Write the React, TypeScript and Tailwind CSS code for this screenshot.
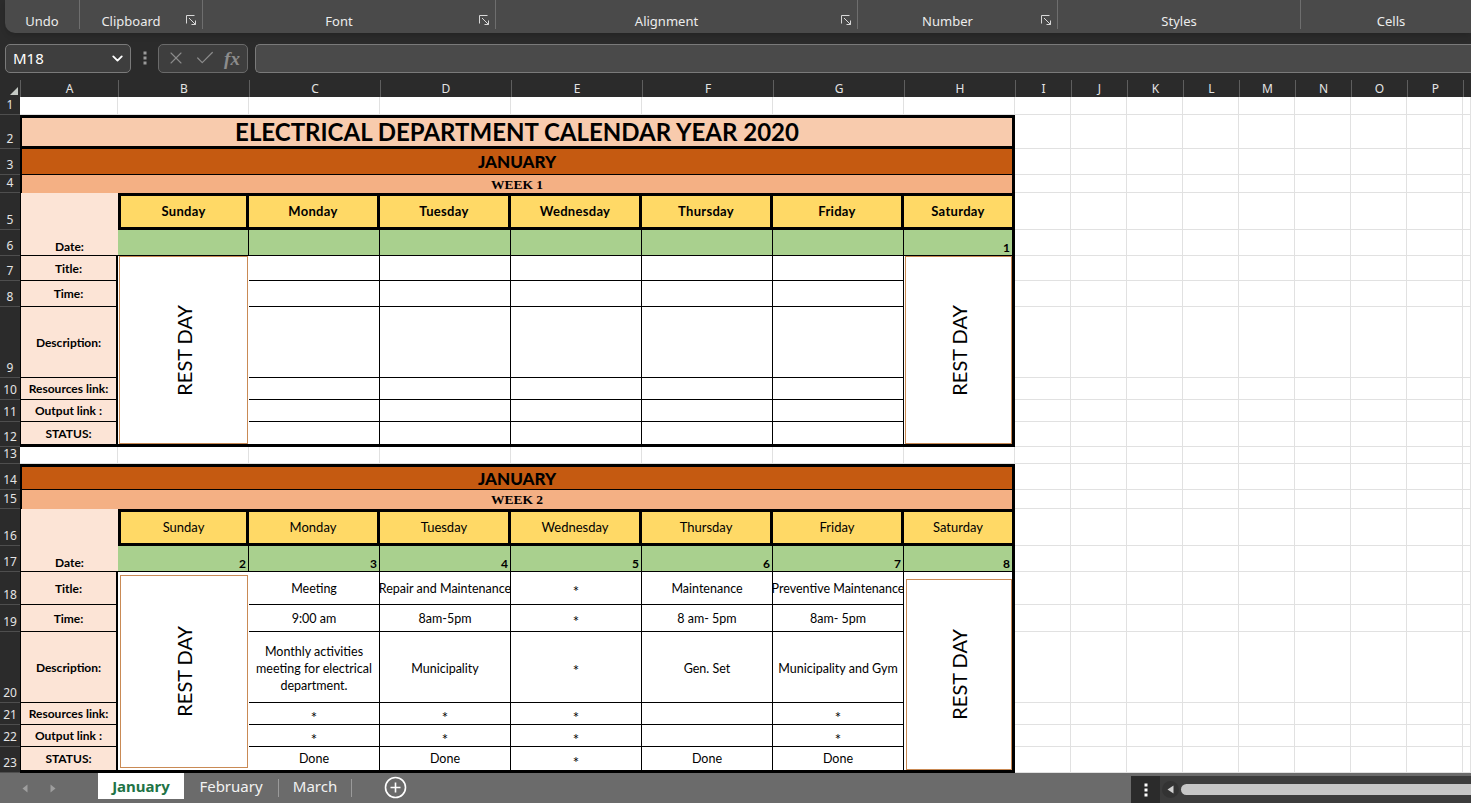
import React from 'react';
import { ChevronDown, X, Check } from 'lucide-react';

// Excel-like sheet: Electrical department calendar (dark chrome, light grid)

const SEGOE = "font-['Noto_Sans','Open_Sans',sans-serif]";
const CAL = "font-[Lato,'Open_Sans',sans-serif]";
const GRID_AH = 'grid grid-cols-[98px_131px_131px_131px_131px_131px_131px_1fr]';

const LETTERS = ['A', 'B', 'C', 'D', 'E', 'F', 'G', 'H', 'I', 'J', 'K', 'L', 'M', 'N', 'O', 'P'];
const ROW_NUMS = Array.from({ length: 23 }, (_, i) => i + 1);
const DAYS = ['Sunday', 'Monday', 'Tuesday', 'Wednesday', 'Thursday', 'Friday', 'Saturday'];
const LABELS = ['Title:', 'Time:', 'Description:', 'Resources link:', 'Output link :', 'STATUS:'];

type Entry = [string, string, string, string, string, string];

const WEEK2: Entry[] = [
  ['Meeting', '9:00 am', 'Monthly activities meeting for electrical department.', '*', '*', 'Done'],
  ['Repair and Maintenance', '8am-5pm', 'Municipality', '*', '*', 'Done'],
  ['*', '*', '*', '*', '*', '*'],
  ['Maintenance', '8 am- 5pm', 'Gen. Set', '', '', 'Done'],
  ['Preventive Maintenance', '8am- 5pm', 'Municipality and Gym', '*', '*', 'Done'],
];
const EMPTY: Entry[] = Array.from({ length: 5 }, () => ['', '', '', '', '', ''] as Entry);

const GROUPS = [
  { label: 'Undo', w: 'w-[75px]', launcher: false },
  { label: 'Clipboard', w: 'w-[123px]', launcher: true },
  { label: 'Font', w: 'w-[293px]', launcher: true },
  { label: 'Alignment', w: 'w-[362px]', launcher: true },
  { label: 'Number', w: 'w-[200px]', launcher: true },
  { label: 'Styles', w: 'w-[243px]', launcher: false },
  { label: 'Cells', w: 'w-[180px]', launcher: false },
];

function Launcher() {
  return (
    <svg width="11" height="11" viewBox="0 0 11 11" fill="none" stroke="#d8d8d8" strokeWidth="1" className="absolute right-[5px] bottom-[3px]">
      <path d="M0.5 8.5V0.5H8.5" />
      <path d="M3 3L9.5 9.5M9.5 5.5V9.5H5.5" />
    </svg>
  );
}

function Ribbon() {
  return (
    <div className="h-[33px] ml-[5px] bg-[#4a4a4a] rounded-bl-[10px] flex overflow-hidden shrink-0 shadow-md">
      {GROUPS.map((g, i) => (
        <div
          key={g.label}
          className={`relative h-[29px] shrink-0 flex items-end justify-center leading-[16px] text-[13px] text-[#ececec] ${SEGOE} ${g.w} ${g.launcher ? 'pr-[20px]' : ''} ${i < GROUPS.length - 1 ? 'border-r border-[#6e6e6e]' : ''}`}
        >
          {g.label}
          {g.launcher && <Launcher />}
        </div>
      ))}
    </div>
  );
}

function FormulaBar() {
  return (
    <div className={`mt-[10px] h-[30px] flex items-center pl-[5px] shrink-0 ${SEGOE}`}>
      <div className="w-[126px] h-[29px] rounded-[5px] border border-[#7a7a7a] bg-[#3e3e3e] flex items-center justify-between pl-[7px] pr-[4px] text-[15px] text-white">
        <span>M18</span>
        <ChevronDown size={17} strokeWidth={2.6} color="#ffffff" />
      </div>
      <div className="w-[27px] flex justify-center">
        <svg width="4" height="14" viewBox="0 0 4 14" fill="#9a9a9a">
          <rect x="0.5" y="0.5" width="3" height="3" />
          <rect x="0.5" y="5.5" width="3" height="3" />
          <rect x="0.5" y="10.5" width="3" height="3" />
        </svg>
      </div>
      <div className="w-[90px] h-[29px] rounded-[5px] border border-[#6a6a6a] bg-[#3e3e3e] flex items-center justify-around px-[3px]">
        <X size={20} strokeWidth={1.3} color="#8c8c8c" />
        <Check size={22} strokeWidth={1.3} color="#8c8c8c" />
        <span className="font-['Liberation_Serif',serif] italic font-bold text-[19px] text-[#8c8c8c] leading-none">fx</span>
      </div>
      <div className="flex-1 h-[29px] ml-[7px] rounded-l-[5px] border border-r-0 border-[#7a7a7a] bg-[#4a4a4a]" />
    </div>
  );
}

function ColumnHeaders() {
  return (
    <div className={`mt-[7px] h-[17px] flex shrink-0 ${SEGOE}`}>
      <div className="w-[20px] shrink-0 flex items-end justify-end">
        <svg width="12" height="12" viewBox="0 0 12 12">
          <polygon points="10,2 10,10 2,10" fill="#c4c9c4" />
        </svg>
      </div>
      <div className="flex-1 grid grid-cols-[98px_131px_131px_131px_131px_131px_131px_111px_56px_56px_56px_56px_56px_56px_56px_56px_1fr]">
        {LETTERS.map((l) => (
          <div key={l} className="border-l border-[#5e5e5e] flex items-center justify-center text-[12px] text-[#e4e4e4] leading-none">
            {l}
          </div>
        ))}
        <div className="border-l border-[#5e5e5e]" />
      </div>
    </div>
  );
}

function RowHeaders() {
  return (
    <div className={`w-[20px] shrink-0 grid grid-rows-[18px_34px_26px_18px_37px_26px_25px_26px_71px_22px_22px_25px_17px_26px_19px_37px_26px_33px_27px_71px_22px_22px_26px] ${SEGOE}`}>
      {ROW_NUMS.map((n) => (
        <div key={n} className="border-b border-[#4e4e4e] flex items-end justify-center pb-[3px] text-[12px] text-[#e4e4e4] leading-none">
          {n}
        </div>
      ))}
    </div>
  );
}

function EmptyRow({ h }: { h: string }) {
  return (
    <div className={`${GRID_AH} ${h} bg-white`}>
      {Array.from({ length: 8 }, (_, i) => (
        <div key={i} className="border-r border-b border-[#e1e1e1]" />
      ))}
    </div>
  );
}

function RightGrid() {
  return (
    <div className="flex-1 bg-white grid grid-cols-[56px_56px_56px_56px_56px_56px_56px_56px_1fr] grid-rows-[18px_34px_26px_18px_37px_26px_25px_26px_71px_22px_22px_25px_17px_26px_19px_37px_26px_33px_27px_71px_22px_22px_26px]">
      {Array.from({ length: 23 * 9 }, (_, i) => (
        <div key={i} className="border-r border-b border-[#e1e1e1]" />
      ))}
    </div>
  );
}

function RestDay({ pad }: { pad: string }) {
  return (
    <div className={`row-span-6 bg-white ${pad}`}>
      <div className="h-full border border-[#c98a55] flex items-center justify-center">
        <span className="[writing-mode:vertical-rl] rotate-180 text-[20px] leading-none">REST DAY</span>
      </div>
    </div>
  );
}

function Week({ first, week, dates, entries }: { first?: boolean; week: number; dates: string[]; entries: Entry[] }) {
  const rows = first
    ? 'grid-rows-[34px_26px_18px_37px_26px_25px_26px_71px_22px_22px_22px]'
    : 'grid-rows-[26px_19px_37px_26px_33px_27px_71px_22px_22px_23px]';
  return (
    <div className={`${GRID_AH} ${rows} border-r-[3px] border-b-[3px] border-black bg-white text-black ${CAL}`}>
      {first && (
        <div className="col-span-8 bg-[#f8cbad] border-l-2 border-t-[3px] border-b-[3px] border-black flex items-center justify-center text-[24px] font-bold leading-none">
          ELECTRICAL DEPARTMENT CALENDAR YEAR 2020
        </div>
      )}
      <div className={`col-span-8 bg-[#c55a11] border-l-2 border-b border-black flex items-center justify-center text-[17px] font-black leading-none ${first ? '' : 'border-t-[3px]'}`}>
        JANUARY
      </div>
      <div className="col-span-8 bg-[#f4b084] border-l-2 border-black flex items-center justify-center font-['Liberation_Serif',serif] font-bold text-[13.5px] leading-none pt-[1px]">
        WEEK {week}
      </div>
      <div className="row-span-2 bg-[#fce4d6] border-l border-b border-black flex items-end justify-center pb-[2px] text-[12px] font-bold leading-none">
        Date:
      </div>
      {DAYS.map((d, i) => (
        <div
          key={d}
          className={`bg-[#ffd966] border-y-[3px] border-black flex items-center justify-center text-[13px] ${first ? 'font-bold tracking-[0.3px]' : ''} ${i === 0 ? 'border-l-[3px]' : ''} ${i < 6 ? 'border-r-[3px]' : ''}`}
        >
          {d}
        </div>
      ))}
      {dates.map((n, i) => (
        <div
          key={i}
          className={`bg-[#a9d08e] border-b border-black flex items-end justify-end pr-[2px] pb-[1px] text-[12px] font-bold leading-none ${i < 6 ? 'border-r' : ''}`}
        >
          {n}
        </div>
      ))}
      {LABELS.map((l, r) => (
        <React.Fragment key={l}>
          <div className={`bg-[#fce4d6] border-l border-r-2 border-black flex items-center justify-center pt-[1px] text-[12px] font-bold leading-none ${r < 5 ? 'border-b' : ''}`}>
            {l}
          </div>
          {r === 0 && <RestDay pad={first ? 'px-[1px]' : 'pl-[2px] pr-[1px] pt-[3px] pb-[2px]'} />}
          {entries.map((e, c) => (
            <div
              key={c}
              className={`border-r border-black flex items-center justify-center text-center overflow-hidden ${r < 5 ? 'border-b' : ''} ${r === 2 ? 'leading-[17px] px-[3px]' : 'whitespace-nowrap leading-none'} ${e[r] === '*' ? 'text-[15px] pt-[7px]' : 'text-[12.5px] pt-[2px]'}`}
            >
              {e[r]}
            </div>
          ))}
          {r === 0 && <RestDay pad={first ? 'pl-[1px]' : 'pl-[2px] pt-[7px]'} />}
        </React.Fragment>
      ))}
    </div>
  );
}

function TabBar() {
  return (
    <div className={`h-[30px] bg-[#6b6b6b] flex shrink-0 ${SEGOE}`}>
      <div className="w-[98px] flex items-center pl-[22px] gap-[22px]">
        <svg width="6" height="9" viewBox="0 0 6 9"><polygon points="5.5,0.5 5.5,8.5 0.5,4.5" fill="#9e9e9e" /></svg>
        <svg width="6" height="9" viewBox="0 0 6 9"><polygon points="0.5,0.5 0.5,8.5 5.5,4.5" fill="#9e9e9e" /></svg>
      </div>
      <div className="w-[86px] h-[26px] bg-white flex items-center justify-center text-[15px] font-bold text-[#217346]">January</div>
      <div className="w-[94px] flex items-center justify-center text-[15px] text-[#f2f2f2] pb-[3px]">February</div>
      <div className="w-px h-[18px] mt-[6px] bg-[#9a9a9a]" />
      <div className="w-[72px] flex items-center justify-center text-[15px] text-[#f2f2f2] pb-[3px]">March</div>
      <div className="w-px h-[18px] mt-[6px] bg-[#9a9a9a]" />
      <div className="w-[32px]" />
      <div className="flex items-center pb-[1px]">
        <svg width="23" height="23" viewBox="0 0 23 23" fill="none" stroke="#ffffff" strokeWidth="1.6">
          <circle cx="11.5" cy="11.5" r="10" />
          <path d="M11.5 6.5V16.5M6.5 11.5H16.5" />
        </svg>
      </div>
      <div className="flex-1" />
      <div className="w-[29px] mt-[3px] bg-[#2b2b2b] flex items-center justify-center">
        <svg width="4" height="14" viewBox="0 0 4 14" fill="#ffffff">
          <rect x="0.5" y="0.5" width="3" height="3" />
          <rect x="0.5" y="5.5" width="3" height="3" />
          <rect x="0.5" y="10.5" width="3" height="3" />
        </svg>
      </div>
      <div className="w-[311px] mt-[3px] bg-[#3c3c3c] flex items-center pl-[2px]">
        <div className="w-[17px] h-[17px] rounded-full bg-[#333333] flex items-center justify-center">
          <svg width="7" height="9" viewBox="0 0 7 9"><polygon points="6.5,0.5 6.5,8.5 0.5,4.5" fill="#d0d0d0" /></svg>
        </div>
        <div className="flex-1 h-[11px] ml-[2px] bg-[#c6c6c6] rounded-l-full" />
      </div>
    </div>
  );
}

export default function App() {
  return (
    <div className="w-[1471px] h-[803px] overflow-hidden bg-[#2b2b2b] flex flex-col select-none">
      <Ribbon />
      <FormulaBar />
      <ColumnHeaders />
      <div className="flex h-[676px] shrink-0">
        <RowHeaders />
        <div className="w-[995px] shrink-0 flex flex-col">
          <EmptyRow h="h-[18px]" />
          <Week first week={1} dates={['', '', '', '', '', '', '1']} entries={EMPTY} />
          <EmptyRow h="h-[17px]" />
          <Week week={2} dates={['2', '3', '4', '5', '6', '7', '8']} entries={WEEK2} />
        </div>
        <RightGrid />
      </div>
      <TabBar />
    </div>
  );
}
